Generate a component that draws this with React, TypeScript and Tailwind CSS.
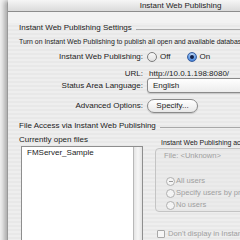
import React from "react";

const PINSTRIPE =
  "bg-[repeating-linear-gradient(180deg,#eeeeee_0px,#eeeeee_2px,#e8e8e8_2px,#e8e8e8_4px)]";

const Radio = ({ checked = false, disabled = false, mixed = false }: { checked?: boolean; disabled?: boolean; mixed?: boolean }) => {
  if (checked) {
    return (
      <span className="relative inline-flex h-[10px] w-[10px] shrink-0 items-center justify-center rounded-full border border-[#3a5f9e] bg-[radial-gradient(circle_at_50%_30%,#cfe3fb,#5d97e3_60%,#2f6bd0)]">
        <span className="h-[4px] w-[4px] rounded-full bg-[#10204a]" />
      </span>
    );
  }
  return (
    <span
      className={`inline-flex shrink-0 items-center justify-center rounded-full border ${
        disabled
          ? "h-[9px] w-[9px] border-[#b0b0b0] bg-[#f4f4f4]"
          : "h-[10px] w-[10px] border-[#7d7d7d] bg-[linear-gradient(180deg,#f8f8f8,#e2e2e2)]"
      }`}
    >
      {mixed && <span className="h-[1px] w-[4px] bg-[#9a9a9a]" />}
    </span>
  );
};

const Label = ({ children }: { children: React.ReactNode }) => (
  <div className="w-[128px] shrink-0 pr-[4px] text-right">{children}</div>
);

export default function App() {
  return (
    <div
      className="relative h-[240px] w-[240px] overflow-hidden bg-[#f2f2f2] text-[#1c1c1c]"
      style={{ fontFamily: '"Liberation Sans", Arial, sans-serif' }}
    >
      <div className="ml-[7px] w-[346px] rounded-t-[4px] border-l border-[#9a9a9a] shadow-[-3px_0_5px_rgba(0,0,0,0.3)]">
        {/* title bar */}
        <div className="flex h-[12px] items-center justify-center border-b border-[#8c8c8c] bg-[linear-gradient(180deg,#f6f6f6,#dadada)] text-[8px] text-[#222]">
          Instant Web Publishing
        </div>

        <div className={`${PINSTRIPE} h-[240px] pl-[11px] text-[8px]`}>
          {/* settings heading */}
          <div className="mt-[11px] flex h-[10px] items-center gap-[4px]">
            <span>Instant Web Publishing Settings</span>
            <span className="mt-[3px] h-px flex-1 bg-[#a8a8a8]" />
          </div>
          <div className="mt-[4px] flex h-[10px] items-center whitespace-nowrap text-[6.9px]">
            Turn on Instant Web Publishing to publish all open and available databases to the web.
          </div>

          <div className="mt-[4px] flex h-[12px] items-center">
            <Label>Instant Web Publishing:</Label>
            <div className="flex items-center gap-[3px]">
              <Radio />
              <span>Off</span>
            </div>
            <div className="ml-[16px] flex items-center gap-[3px]">
              <Radio checked />
              <span>On</span>
            </div>
          </div>

          <div className="mt-[7px] flex h-[8px] items-center">
            <Label>URL:</Label>
            <span className="ml-[2px]">http://10.0.1.198:8080/</span>
          </div>

          <div className="flex h-[15px] items-center">
            <Label>Status Area Language:</Label>
            <div className="flex h-[15px] w-[200px] items-center rounded-[3px] border border-[#8a8a8a] bg-[linear-gradient(180deg,#ffffff,#ececec)] pl-[5px] shadow-[0_1px_1px_rgba(0,0,0,0.15)]">
              English
            </div>
          </div>

          <div className="mt-[6px] flex h-[14px] items-center">
            <Label>Advanced Options:</Label>
            <div className="flex h-[14px] w-[51px] items-center justify-center rounded-full border border-[#8a8a8a] bg-[linear-gradient(180deg,#ffffff,#e8e8e8)] shadow-[0_1px_1px_rgba(0,0,0,0.15)]">
              Specify...
            </div>
          </div>

          {/* file access heading */}
          <div className="mt-[8px] flex h-[10px] items-center gap-[4px]">
            <span>File Access via Instant Web Publishing</span>
            <span className="mt-[3px] h-px flex-1 bg-[#a8a8a8]" />
          </div>

          <div className="flex items-start">
            <div className="w-[124px] shrink-0">
              <div className="mt-[4px] flex h-[10px] items-center">Currently open files</div>
              <div className="ml-[2px] mt-[1px] flex h-[95px] border border-[#8e8e8e] bg-white">
                <div className="flex-1 pl-[5px]">FMServer_Sample</div>
                <div className="w-[9px] border-l border-[#b8b8b8] bg-[linear-gradient(90deg,#e4e4e4,#f6f6f6,#e4e4e4)]" />
              </div>
            </div>

            <div className="ml-[12px] flex-1">
              <div className="mt-[7px] flex h-[10px] items-center whitespace-nowrap pl-[6px] text-[6.9px]">
                Instant Web Publishing access
              </div>
              <div className="h-[64px] rounded-[4px] border border-[#c4c4c4] bg-[#e6e6e6]/40 pl-[8px] text-[7.6px] text-[#a0a0a0]">
                <div className="mt-[2px] flex h-[10px] items-center">File: &lt;Unknown&gt;</div>
                <div className="ml-[2px] mt-[14px] flex h-[12px] items-center gap-[1px]">
                  <Radio disabled mixed />
                  <span>All users</span>
                </div>
                <div className="ml-[2px] flex h-[12px] items-center gap-[1px]">
                  <Radio disabled />
                  <span className="whitespace-nowrap">Specify users by privilege set</span>
                </div>
                <div className="ml-[2px] flex h-[12px] items-center gap-[1px]">
                  <Radio disabled />
                  <span>No users</span>
                </div>
              </div>
              <div className="ml-[2px] mt-[17px] flex h-[10px] items-center gap-[3px] whitespace-nowrap text-[7.6px] text-[#a0a0a0]">
                <span className="h-[8px] w-[8px] rounded-[1px] border border-[#a8a8a8] bg-[#f6f6f6]" />
                <span>Don't display in Instant Web Publishing homepage</span>
              </div>
            </div>
          </div>
        </div>
      </div>
    </div>
  );
}
